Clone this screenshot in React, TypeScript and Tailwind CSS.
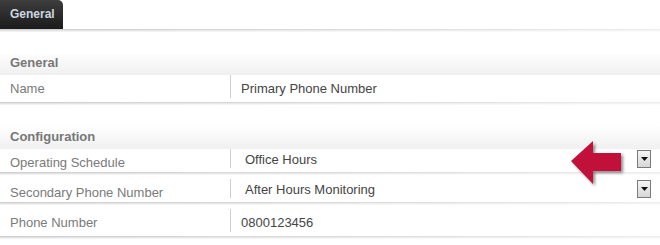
import React from "react";

const Shadow = () => (
  <div>
    <div className="h-px bg-gradient-to-r from-[#cfcfcf] via-[#dadada] to-[#eeeeee]" />
    <div className="h-px bg-gradient-to-r from-[#e2e2e2] to-[#f4f4f4]" />
    <div className="h-px bg-gradient-to-r from-[#f1f1f1] to-[#fbfbfb]" />
  </div>
);

const SectionHeader = ({ title }: { title: string }) => (
  <div className="h-[24px] pt-[4px] pl-[10px] bg-gradient-to-b from-white to-[#f0f0f0] text-[13px] leading-[15px] font-bold text-[#777]">
    {title}
  </div>
);

const DropButton = () => (
  <div className="mt-[1px] mr-[9px] w-[14px] h-[18px] border border-[#7a7a7a] bg-gradient-to-b from-[#f6f6f6] to-[#d6d6d6] flex items-center justify-center">
    <svg width="7" height="4" viewBox="0 0 7 4">
      <polygon points="0,0 7,0 3.5,4" fill="#111" />
    </svg>
  </div>
);

type RowPropsT = {
  label: string;
  value: string;
  tall?: boolean;
  select?: boolean;
};

const Row = ({ label, value, tall, select }: RowPropsT) => (
  <div className="flex flex-col mb-[4px]">
    <div className={`flex items-start ${tall ? "h-[27px]" : "h-[23px]"}`}>
      <div className="w-[230px] pl-[10px] pt-[6px] text-[13px] leading-[15px] text-[#7a7a7a]">
        {label}
      </div>
      <div className={`w-px bg-[#cfcfcf] ${tall ? "h-[23px]" : "h-[19px]"}`} />
      <div
        className={`flex-1 text-[13px] leading-[15px] text-[#444] ${
          select ? "pl-[14px] pt-[3px]" : "pl-[10px] pt-[6px]"
        }`}
      >
        {value}
      </div>
      {select && <DropButton />}
    </div>
    <Shadow />
  </div>
);

export default function App() {
  return (
    <div className="relative flex flex-col w-[660px] h-[245px] overflow-hidden bg-white font-['Liberation_Sans',Arial,sans-serif]">
      <div className="h-[29px] flex">
        <div className="w-[63px] h-full rounded-tr-[5px] bg-gradient-to-b from-[#3e3e3e] to-[#1b1b1b] pl-[10px] pt-[7px] text-[12px] leading-[14px] font-bold text-[#cdd7e2]">
          General
        </div>
      </div>
      <Shadow />

      <div className="flex flex-col mt-[19px]">
        <SectionHeader title="General" />
        <Row label="Name" value="Primary Phone Number" tall />
      </div>

      <div className="flex flex-col mt-[16px]">
        <SectionHeader title="Configuration" />
        <Row label="Operating Schedule" value="Office Hours" select />
        <Row label="Secondary Phone Number" value="After Hours Monitoring" select />
        <Row label="Phone Number" value="0800123456" tall />
      </div>

      <svg
        className="absolute left-[568px] top-[138px] drop-shadow-[2px_2px_1.5px_rgba(0,0,0,0.45)]"
        width="60"
        height="52"
        viewBox="0 0 60 52"
      >
        <polygon
          points="3,23 25,3 25,15 53,15 53,33 25,33 25,46"
          fill="#c1113a"
        />
      </svg>
    </div>
  );
}
